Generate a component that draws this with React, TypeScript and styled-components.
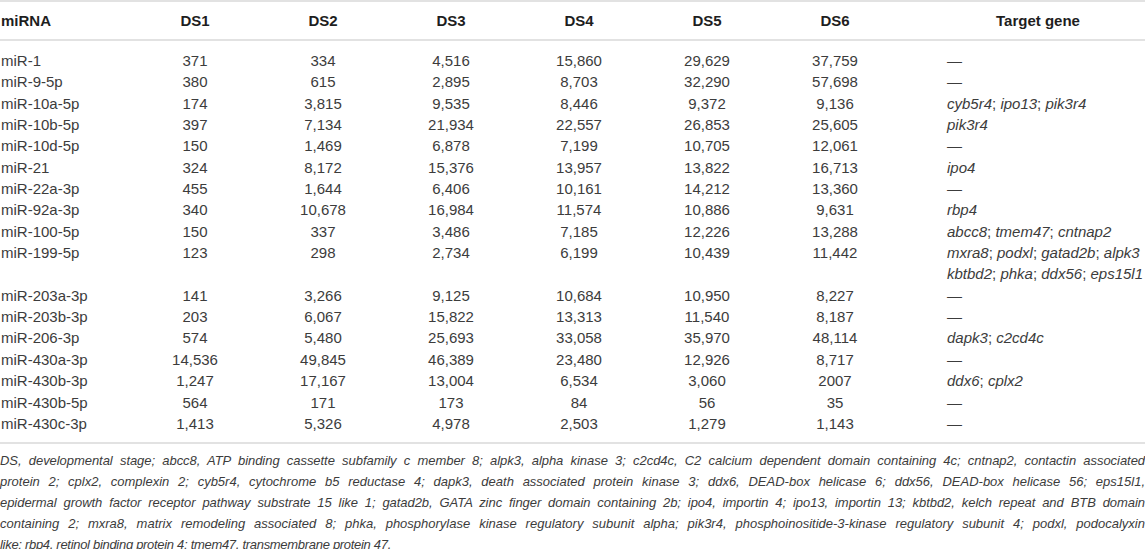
import React from "react";
import styled, { createGlobalStyle } from "styled-components";

const Global = createGlobalStyle`
  html, body { margin: 0; padding: 0; background: #ffffff; }
  body { font-family: "Liberation Sans", Arial, sans-serif; color: #3a3a3a; }
`;

const Page = styled.div`
  width: 1145px;
`;

const Table = styled.div`
  border-top: 2px solid #e2e2e2;
  border-bottom: 2px solid #e2e2e2;
`;

const cols = "131px repeat(6, 128px) 1fr";

const HeadRow = styled.div`
  display: grid;
  grid-template-columns: ${cols};
  height: 37px;
  border-bottom: 2px solid #e2e2e2;
  font-size: 15px;
  font-weight: 700;
  color: #1e1e1e;
  line-height: 37px;
`;

const HeadCell = styled.div<{ $align?: "left" | "center"; $target?: boolean }>`
  text-align: ${(p) => p.$align ?? "center"};
  padding: ${(p) => (p.$target ? "0 16px 0 48px" : p.$align === "left" ? "0 0 0 1px" : "0")};
`;

const Body = styled.div`
  padding: 9px 0 8px;
`;

const Row = styled.div`
  display: grid;
  grid-template-columns: ${cols};
  font-size: 15px;
  line-height: 21.35px;
  color: #3c3c3c;
`;

const NameCell = styled.div`
  padding-left: 1px;
`;

const NumCell = styled.div`
  text-align: center;
`;

const TargetCell = styled.div`
  padding-left: 48px;
  white-space: nowrap;
`;

const Gene = styled.em`
  font-style: italic;
`;

const Foot = styled.div`
  padding-top: 6px;
  font-size: 13px;
  line-height: 21px;
  font-style: italic;
  color: #3c3c3c;
`;

const FootLine = styled.div<{ $last?: boolean; $tight?: number }>`
  text-align: ${(p) => (p.$last ? "left" : "justify")};
  text-align-last: ${(p) => (p.$last ? "left" : "justify")};
  letter-spacing: ${(p) => p.$tight ?? 0}px;
`;

type R = { name: string; v: string[]; genes?: string[][] };

const rows: R[] = [
  { name: "miR-1", v: ["371", "334", "4,516", "15,860", "29,629", "37,759"] },
  { name: "miR-9-5p", v: ["380", "615", "2,895", "8,703", "32,290", "57,698"] },
  { name: "miR-10a-5p", v: ["174", "3,815", "9,535", "8,446", "9,372", "9,136"], genes: [["cyb5r4", "ipo13", "pik3r4"]] },
  { name: "miR-10b-5p", v: ["397", "7,134", "21,934", "22,557", "26,853", "25,605"], genes: [["pik3r4"]] },
  { name: "miR-10d-5p", v: ["150", "1,469", "6,878", "7,199", "10,705", "12,061"] },
  { name: "miR-21", v: ["324", "8,172", "15,376", "13,957", "13,822", "16,713"], genes: [["ipo4"]] },
  { name: "miR-22a-3p", v: ["455", "1,644", "6,406", "10,161", "14,212", "13,360"] },
  { name: "miR-92a-3p", v: ["340", "10,678", "16,984", "11,574", "10,886", "9,631"], genes: [["rbp4"]] },
  { name: "miR-100-5p", v: ["150", "337", "3,486", "7,185", "12,226", "13,288"], genes: [["abcc8", "tmem47", "cntnap2"]] },
  {
    name: "miR-199-5p",
    v: ["123", "298", "2,734", "6,199", "10,439", "11,442"],
    genes: [
      ["mxra8", "podxl", "gatad2b", "alpk3"],
      ["kbtbd2", "phka", "ddx56", "eps15l1"],
    ],
  },
  { name: "miR-203a-3p", v: ["141", "3,266", "9,125", "10,684", "10,950", "8,227"] },
  { name: "miR-203b-3p", v: ["203", "6,067", "15,822", "13,313", "11,540", "8,187"] },
  { name: "miR-206-3p", v: ["574", "5,480", "25,693", "33,058", "35,970", "48,114"], genes: [["dapk3", "c2cd4c"]] },
  { name: "miR-430a-3p", v: ["14,536", "49,845", "46,389", "23,480", "12,926", "8,717"] },
  { name: "miR-430b-3p", v: ["1,247", "17,167", "13,004", "6,534", "3,060", "2007"], genes: [["ddx6", "cplx2"]] },
  { name: "miR-430b-5p", v: ["564", "171", "173", "84", "56", "35"] },
  { name: "miR-430c-3p", v: ["1,413", "5,326", "4,978", "2,503", "1,279", "1,143"] },
];

const GeneLine: React.FC<{ list: string[] }> = ({ list }) => (
  <div>
    {list.map((g, i) => (
      <React.Fragment key={g}>
        {i > 0 && "; "}
        <Gene>{g}</Gene>
      </React.Fragment>
    ))}
  </div>
);

const footLines: { text: string; tight: number }[] = [
  {
    text: "DS, developmental stage; abcc8, ATP binding cassette subfamily c member 8; alpk3, alpha kinase 3; c2cd4c, C2 calcium dependent domain containing 4c; cntnap2, contactin associated",
    tight: -0.05,
  },
  {
    text: "protein 2; cplx2, complexin 2; cyb5r4, cytochrome b5 reductase 4; dapk3, death associated protein kinase 3; ddx6, DEAD-box helicase 6; ddx56, DEAD-box helicase 56; eps15l1,",
    tight: 0,
  },
  {
    text: "epidermal growth factor receptor pathway substrate 15 like 1; gatad2b, GATA zinc finger domain containing 2b; ipo4, importin 4; ipo13, importin 13; kbtbd2, kelch repeat and BTB domain",
    tight: -0.05,
  },
  {
    text: "containing 2; mxra8, matrix remodeling associated 8; phka, phosphorylase kinase regulatory subunit alpha; pik3r4, phosphoinositide-3-kinase regulatory subunit 4; podxl, podocalyxin",
    tight: 0,
  },
  { text: "like; rbp4, retinol binding protein 4; tmem47, transmembrane protein 47.", tight: -0.3 },
];

export default function App() {
  return (
    <Page>
      <Global />
      <Table>
        <HeadRow>
          <HeadCell $align="left">miRNA</HeadCell>
          {["DS1", "DS2", "DS3", "DS4", "DS5", "DS6"].map((h) => (
            <HeadCell key={h}>{h}</HeadCell>
          ))}
          <HeadCell $target>Target gene</HeadCell>
        </HeadRow>
        <Body>
          {rows.map((r) => (
            <Row key={r.name}>
              <NameCell>{r.name}</NameCell>
              {r.v.map((n, i) => (
                <NumCell key={i}>{n}</NumCell>
              ))}
              <TargetCell>
                {r.genes ? r.genes.map((l, i) => <GeneLine key={i} list={l} />) : "—"}
              </TargetCell>
            </Row>
          ))}
        </Body>
      </Table>
      <Foot>
        {footLines.map((l, i) => (
          <FootLine key={i} $last={i === footLines.length - 1} $tight={l.tight}>
            {l.text}
          </FootLine>
        ))}
      </Foot>
    </Page>
  );
}
